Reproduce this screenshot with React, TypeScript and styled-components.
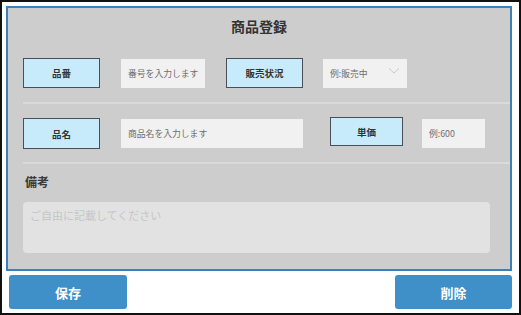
import React from 'react'
import styled, { createGlobalStyle } from 'styled-components'

const GlobalStyle = createGlobalStyle`
  html, body {
    margin: 0;
    padding: 0;
    background: #ffffff;
  }
  * {
    box-sizing: border-box;
  }
`

const font = `"Noto Sans CJK JP", "Noto Sans", "Liberation Sans", sans-serif`

const App: React.FunctionComponent = () => {
    return (
        <>
            <GlobalStyle />
            <Frame>
                <Panel>
                    <Title>商品登録</Title>

                    <Row style={{ marginTop: 14 }}>
                        <Label w={77} h={30}>品番</Label>
                        <Field w={84} gap={21}>番号を入力します</Field>
                        <Label w={77} h={30} gap={21}>販売状況</Label>
                        <Field w={84} gap={20}>
                            例:販売中
                            <Chevron viewBox="0 0 12 8">
                                <path d="M1 1.5 L6 6 L11 1.5" fill="none" stroke="#c9c9c9" strokeWidth="1" />
                            </Chevron>
                        </Field>
                    </Row>

                    <Separator />

                    <Row style={{ marginTop: 14 }}>
                        <Label w={77} h={31}>品名</Label>
                        <Field w={182} gap={21}>商品名を入力します</Field>
                        <Label w={73} h={29} gap={27} alignTop>単価</Label>
                        <Field w={63} gap={19}>例:600</Field>
                    </Row>

                    <Separator style={{ marginTop: 13 }} />

                    <RemarksTitle>備考</RemarksTitle>
                    <Remarks>ご自由に記載してください</Remarks>
                </Panel>

                <ButtonRow>
                    <Button style={{ marginLeft: 3, width: 118 }}>保存</Button>
                    <Button style={{ width: 117 }}>削除</Button>
                </ButtonRow>
            </Frame>
        </>
    )
}

export default App


const Frame = styled.div`
  width: 521px;
  height: 315px;
  border: 2px solid #111;
  padding: 4px 0 0 4px;
  display: flex;
  flex-direction: column;
  font-family: ${font};
`

const Panel = styled.div`
  width: 506px;
  height: 265px;
  border: 2px solid #3b80b9;
  background: #cdcdcd;
  display: flex;
  flex-direction: column;
  padding-left: 15px;
`

const Title = styled.div`
  height: 36px;
  line-height: 36px;
  text-align: center;
  font-size: 14px;
  font-weight: 700;
  color: #333;
  margin-left: -15px;
`

const Row = styled.div`
  display: flex;
  align-items: flex-start;
`

const Label = styled.div<{ w: number; h: number; gap?: number; alignTop?: boolean }>`
  width: ${({ w }) => w}px;
  height: ${({ h }) => h}px;
  margin-left: ${({ gap }) => gap || 0}px;
  margin-top: ${({ alignTop }) => (alignTop ? '-1px' : '0')};
  background: #c8ebfb;
  border: 1.5px solid #4a4f55;
  display: flex;
  align-items: center;
  justify-content: center;
  font-size: 9.5px;
  font-weight: 700;
  color: #333;
`

const Field = styled.div<{ w: number; gap?: number }>`
  position: relative;
  width: ${({ w }) => w}px;
  height: 29px;
  margin-top: 1px;
  margin-left: ${({ gap }) => gap || 0}px;
  background: #f1f1f1;
  display: flex;
  align-items: center;
  padding-left: 7px;
  font-size: 8.8px;
  color: #6e6e6e;
`

const Chevron = styled.svg`
  position: absolute;
  right: 7px;
  top: 8px;
  width: 12px;
  height: 8px;
`

const Separator = styled.div`
  height: 2px;
  margin-top: 14px;
  background: #dadada;
`

const RemarksTitle = styled.div`
  margin-top: 10px;
  height: 16px;
  line-height: 16px;
  font-size: 12px;
  font-weight: 700;
  color: #3a3a3a;
  padding-left: 2px;
`

const Remarks = styled.div`
  margin-top: 12px;
  width: 467px;
  height: 51px;
  border-radius: 4px;
  background: #e2e2e2;
  padding: 5px 0 0 7px;
  font-size: 11px;
  color: #c6c6c6;
`

const ButtonRow = styled.div`
  width: 506px;
  margin-top: 4px;
  display: flex;
  justify-content: space-between;
`

const Button = styled.div`
  height: 34px;
  border-radius: 3px;
  background: #3f90c9;
  color: #ffffff;
  font-size: 13px;
  font-weight: 700;
  display: flex;
  align-items: center;
  justify-content: center;
`
